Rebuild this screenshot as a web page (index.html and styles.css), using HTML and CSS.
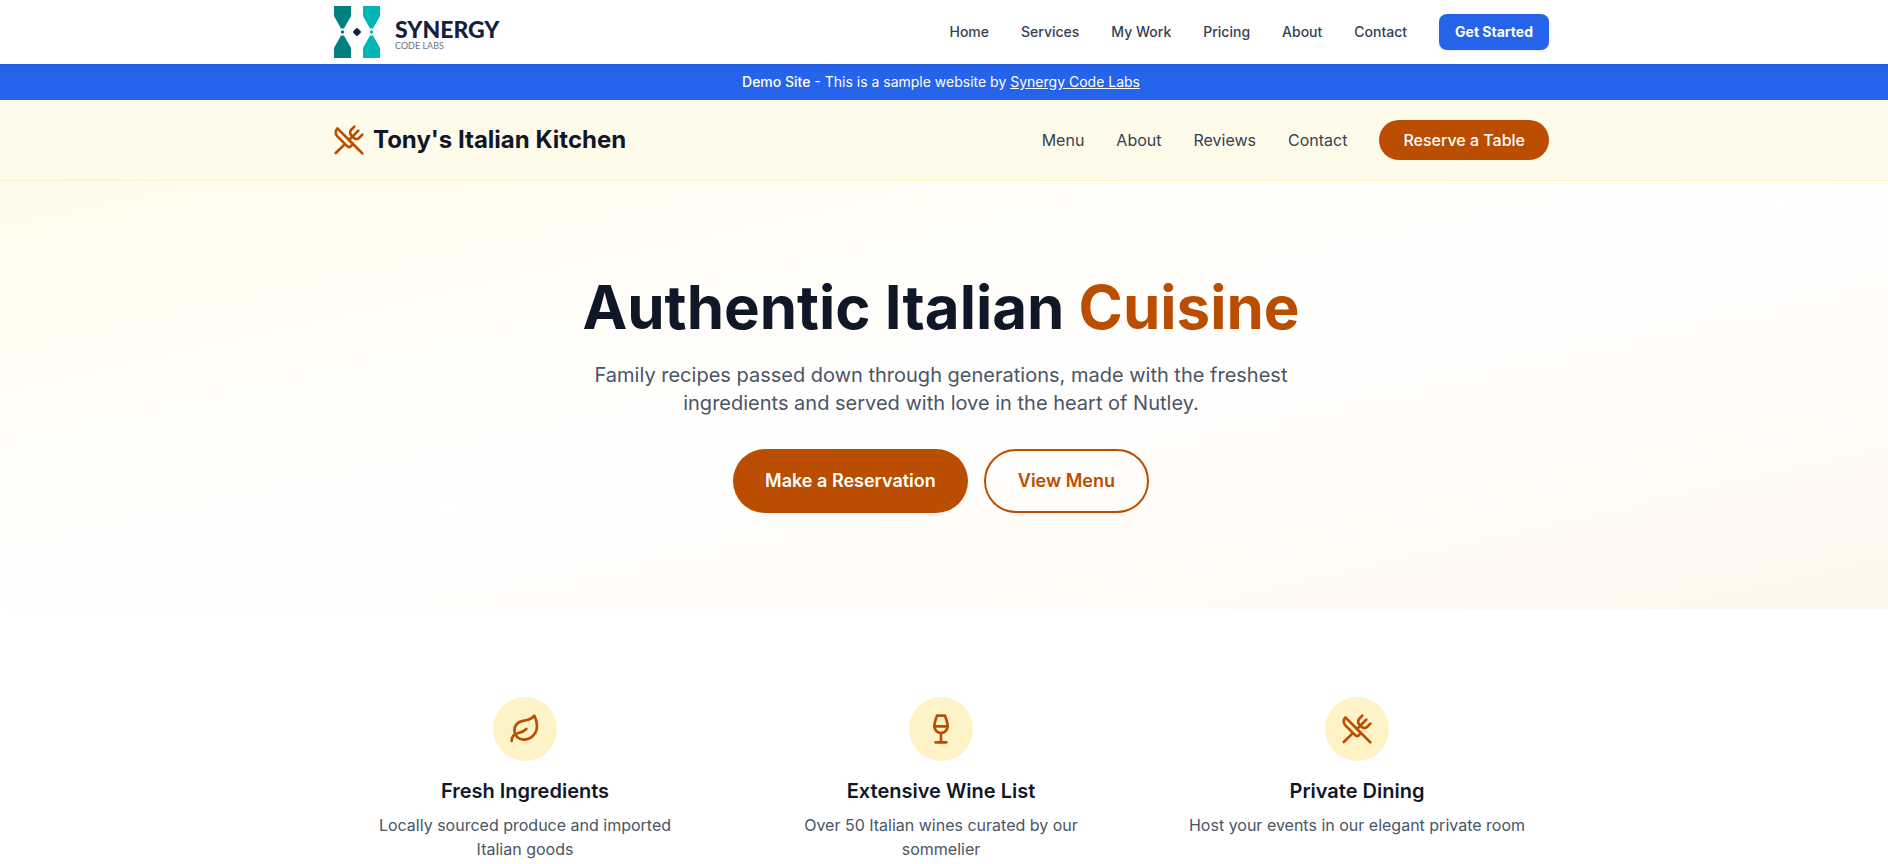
FILE: index.html
```html
<!DOCTYPE html>
<html lang="en">
  <head>
    <meta charset="UTF-8" />
    <meta name="viewport" content="width=device-width, initial-scale=1.0" />
    <title>Tony's Italian Kitchen</title>
    <link rel="stylesheet" href="styles.css">
  </head>
  <body>
    <svg width="0" height="0" class="sprite" aria-hidden="true">
      <symbol id="utensils" viewBox="0 0 24 24">
        <path d="m16 2-2.3 2.3a3 3 0 0 0 0 4.2l1.8 1.8a3 3 0 0 0 4.2 0L22 8" />
        <path d="M15 15 3.3 3.3a4.2 4.2 0 0 0 0 6l7.3 7.3c.7.7 2 .7 2.8 0L15 15Zm0 0 7 7" />
        <path d="m2.1 21.8 6.4-6.3" />
        <path d="m19 5-7 7" />
      </symbol>
    </svg>

    <div class="site-bar">
      <div class="container">
        <a class="logo" href="#">
          <svg class="logo-mark" viewBox="-1 0 48 52" aria-hidden="true">
            <g fill="#008080">
              <path d="M0 0h17v10L10 22.500H7L0 10z" />
              <circle cx="8.500" cy="26" r="1.700" />
              <path d="M0 52h17V42L10 29.500H7L0 42z" />
            </g>
            <g fill="#00b5b5">
              <path d="M29 0h17v10l-7 12.500h-3L29 10z" />
              <circle cx="37.500" cy="26" r="1.700" />
              <path d="M29 52h17V42l-7-12.500h-3L29 42z" />
            </g>
            <path class="logo-diamond" d="m23 23 3 3-3 3-3-3z" />
          </svg>
          <span class="logo-text">
            <span class="logo-name">SYNERGY</span>
            <span class="logo-sub">CODE LABS</span>
          </span>
        </a>
        <nav class="site-nav">
          <a href="#">Home</a>
          <a href="#">Services</a>
          <a href="#">My Work</a>
          <a href="#">Pricing</a>
          <a href="#">About</a>
          <a href="#">Contact</a>
          <button type="button" class="get-started">Get Started</button>
        </nav>
      </div>
    </div>

    <div class="demo-banner">
      <span class="demo-label">Demo Site</span> - This is a sample website by <a href="#">Synergy Code Labs</a>
    </div>

    <header class="header">
      <div class="container">
        <a class="brand" href="#">
          <svg class="icon" aria-hidden="true"><use href="#utensils" /></svg>
          <span>Tony's Italian Kitchen</span>
        </a>
        <nav class="nav">
          <a href="#menu">Menu</a>
          <a href="#about">About</a>
          <a href="#reviews">Reviews</a>
          <a href="#contact">Contact</a>
          <button type="button" class="reserve">Reserve a Table</button>
        </nav>
      </div>
    </header>

    <section class="hero">
      <div class="hero-inner">
        <h1>Authentic Italian <span>Cuisine</span></h1>
        <p>
          Family recipes passed down through generations, made with the freshest
          ingredients and served with love in the heart of Nutley.
        </p>
        <div class="hero-buttons">
          <button type="button" class="btn btn-primary">Make a Reservation</button>
          <button type="button" class="btn btn-outline">View Menu</button>
        </div>
      </div>
    </section>

    <section class="features">
      <div class="features-grid">
        <div class="feature">
          <div class="feature-icon">
            <svg class="icon" viewBox="0 0 24 24" aria-hidden="true">
              <path d="M11 20A7 7 0 0 1 9.8 6.100C15.500 5 17 4.480 19 2c1 2 2 4.180 2 8 0 5.500-4.780 10-10 10Z" />
              <path d="M2 21c0-3 1.850-5.360 5.080-6C9.500 14.520 12 13 13 12" />
            </svg>
          </div>
          <h3>Fresh Ingredients</h3>
          <p>Locally sourced produce and imported Italian goods</p>
        </div>
        <div class="feature">
          <div class="feature-icon">
            <svg class="icon" viewBox="0 0 24 24" aria-hidden="true">
              <path d="M8 22h8" />
              <path d="M7 10h10" />
              <path d="M12 15v7" />
              <path d="M12 15a5 5 0 0 0 5-5c0-2-.5-4-2-8H9c-1.500 4-2 6-2 8a5 5 0 0 0 5 5Z" />
            </svg>
          </div>
          <h3>Extensive Wine List</h3>
          <p>Over 50 Italian wines curated by our sommelier</p>
        </div>
        <div class="feature">
          <div class="feature-icon">
            <svg class="icon" aria-hidden="true"><use href="#utensils" /></svg>
          </div>
          <h3>Private Dining</h3>
          <p>Host your events in our elegant private room</p>
        </div>
      </div>
    </section>
  </body>
</html>
```
FILE: styles.css
```css
* {
  box-sizing: border-box;
  margin: 0;
  padding: 0;
}
body {
  font-family: Inter, "Liberation Sans", sans-serif;
  font-size: 16px;
  line-height: 24px;
  color: #101828;
  background-color: #ffffff;
  padding-right: 6px;
}
a {
  color: inherit;
  text-decoration: none;
}
button {
  font-family: inherit;
  border: none;
  cursor: pointer;
}
.sprite {
  position: absolute;
}
.icon {
  width: 32px;
  height: 32px;
  fill: none;
  stroke: #bb4d00;
  stroke-width: 2;
  stroke-linecap: round;
  stroke-linejoin: round;
}
.container {
  max-width: 1280px;
  margin: 0 auto;
  padding: 0 32px;
  display: flex;
  justify-content: space-between;
  align-items: center;
}

/* Full-width bands reach past the body padding */
.site-bar,
.demo-banner,
.header,
.hero {
  margin-right: -6px;
  padding-right: 6px;
}

/* Agency bar */
.site-bar {
  position: relative;
  background-color: #ffffff;
  box-shadow: 0 1px 3px rgba(0, 0, 0, 0.1);
}
.site-bar .container {
  height: 64px;
}
.logo {
  display: flex;
  align-items: center;
  gap: 14px;
}
.logo-mark {
  width: 48px;
  height: 52px;
}
.logo-diamond {
  fill: #14213d;
  stroke: #14213d;
  stroke-width: 2;
  stroke-linejoin: round;
}
.logo-text {
  display: flex;
  flex-direction: column;
  padding-top: 3px;
}
.logo-name {
  font-family: Lato, sans-serif;
  font-size: 23px;
  font-weight: 900;
  line-height: 24px;
  color: #14213d;
}
.logo-sub {
  font-family: Lato, sans-serif;
  font-size: 9px;
  line-height: 10px;
  color: #6a7282;
}
.site-nav {
  display: flex;
  align-items: center;
  gap: 32px;
  font-size: 14px;
  font-weight: 500;
  line-height: 20px;
  color: #364153;
}
.get-started {
  padding: 8px 16px;
  font-size: 14px;
  font-weight: 700;
  line-height: 20px;
  color: #ffffff;
  background-color: #2563eb;
  border-radius: 8px;
  box-shadow: 0 1px 3px rgba(0, 0, 0, 0.1);
}

/* Demo notice */
.demo-banner {
  padding-top: 8px;
  padding-bottom: 8px;
  font-size: 14px;
  line-height: 20px;
  text-align: center;
  color: #ffffff;
  background-color: #2563eb;
}
.demo-label {
  font-weight: 500;
}
.demo-banner a {
  text-decoration: underline;
}

/* Restaurant header */
.header {
  padding-top: 20px;
  padding-bottom: 20px;
  background-color: #fffbeb;
  border-bottom: 1px solid #fef3c6;
}
.brand {
  display: flex;
  align-items: center;
  gap: 8px;
  font-size: 24px;
  font-weight: 700;
  line-height: 32px;
}
.nav {
  display: flex;
  align-items: center;
  gap: 32px;
  color: #364153;
}
.reserve {
  padding: 8px 24px;
  font-size: 16px;
  font-weight: 500;
  line-height: 24px;
  color: #ffffff;
  background-color: #bb4d00;
  border-radius: 20px;
}

/* Hero */
.hero {
  padding-top: 96px;
  padding-bottom: 96px;
  background: linear-gradient(to bottom right, #fffbeb, #ffffff, #fff7ed);
}
.hero-inner {
  max-width: 768px;
  margin: 0 auto;
  text-align: center;
}
.hero h1 {
  margin-bottom: 24px;
  font-size: 60px;
  font-weight: 700;
  line-height: 60px;
}
.hero h1 span {
  color: #bb4d00;
}
.hero p {
  margin-bottom: 32px;
  font-size: 20px;
  line-height: 28px;
  color: #4a5565;
}
.hero-buttons {
  display: flex;
  justify-content: center;
  gap: 16px;
}
.btn {
  padding: 16px 32px;
  font-size: 18px;
  font-weight: 600;
  line-height: 28px;
  border-radius: 32px;
}
.btn-primary {
  color: #ffffff;
  background-color: #bb4d00;
}
.btn-outline {
  color: #bb4d00;
  background-color: transparent;
  border: 2px solid #bb4d00;
}

/* Features */
.features {
  padding: 64px 0;
}
.features-grid {
  max-width: 1280px;
  margin: 0 auto;
  padding: 0 32px;
  display: grid;
  grid-template-columns: repeat(3, 1fr);
  gap: 32px;
}
.feature {
  padding: 24px 22px;
  text-align: center;
}
.feature-icon {
  width: 64px;
  height: 64px;
  margin: 0 auto 16px;
  display: flex;
  align-items: center;
  justify-content: center;
  background-color: #fef3c6;
  border-radius: 50%;
}
.feature h3 {
  margin-bottom: 8px;
  font-size: 20px;
  font-weight: 600;
  line-height: 28px;
}
.feature p {
  color: #4a5565;
}
```
